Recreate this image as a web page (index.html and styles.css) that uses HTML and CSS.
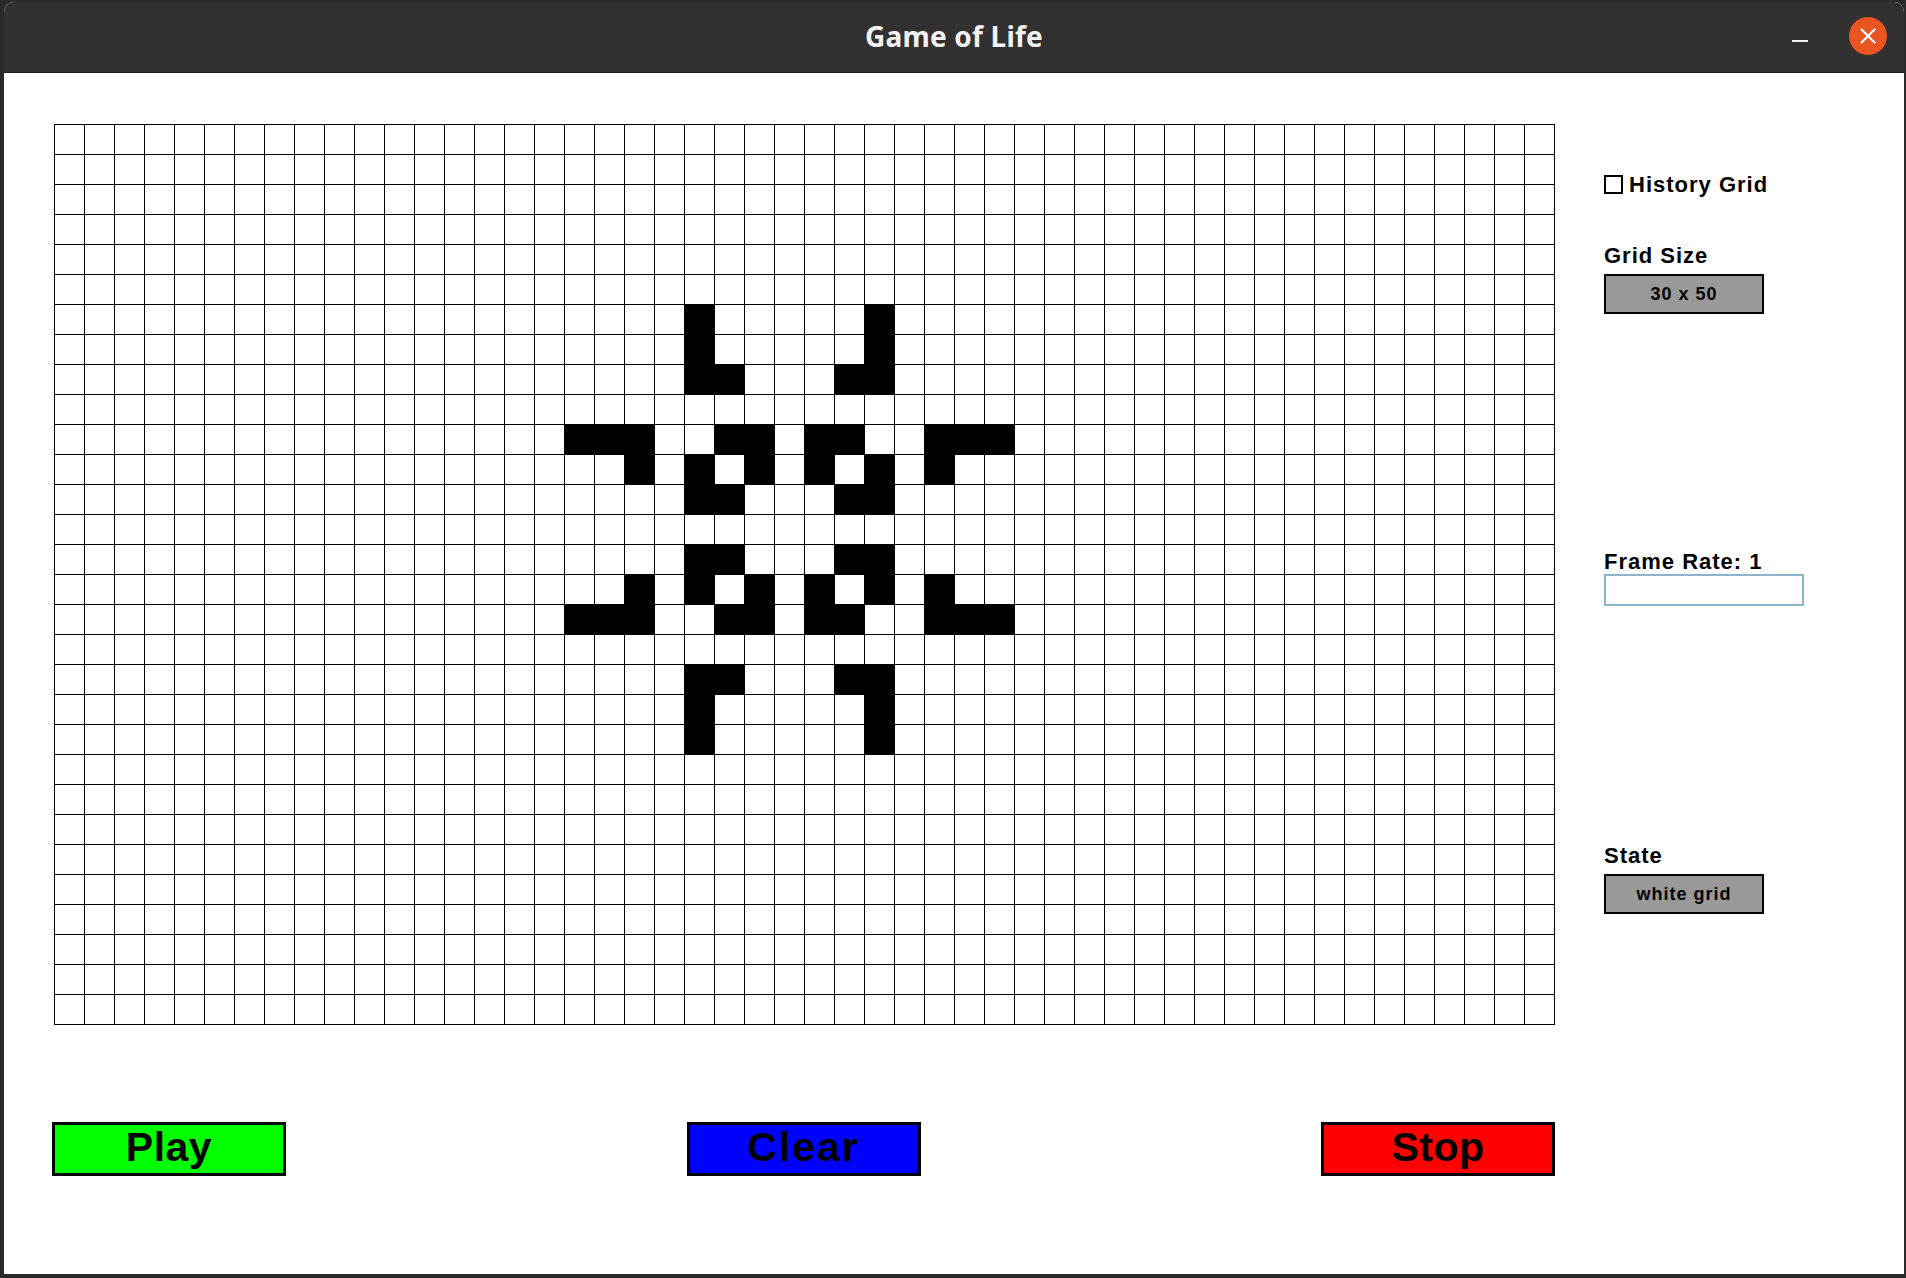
FILE: index.html
```html
<!DOCTYPE html>
<html lang="en">
<head>
<meta charset="utf-8">
<title>Game of Life</title>
<link rel="stylesheet" href="styles.css">
</head>
<body>
<div class="window">
  <header class="titlebar">
    <div class="tb-left"></div>
    <div class="tb-title">Game of Life</div>
    <div class="tb-right">
      <span class="tb-min"></span>
      <span class="tb-close">
        <svg width="16" height="16" viewBox="0 0 16 16"><path d="M1.5 1.5 L14.5 14.5 M14.5 1.5 L1.5 14.5" stroke="#fff" stroke-width="2.2" stroke-linecap="round"/></svg>
      </span>
    </div>
  </header>
  <main class="content">
    <div class="main">
      <div class="board">
        <div class="cell" style="grid-row:7;grid-column:22"></div>
        <div class="cell" style="grid-row:7;grid-column:28"></div>
        <div class="cell" style="grid-row:8;grid-column:22"></div>
        <div class="cell" style="grid-row:8;grid-column:28"></div>
        <div class="cell" style="grid-row:9;grid-column:22"></div>
        <div class="cell" style="grid-row:9;grid-column:23"></div>
        <div class="cell" style="grid-row:9;grid-column:27"></div>
        <div class="cell" style="grid-row:9;grid-column:28"></div>

        <div class="cell" style="grid-row:11;grid-column:18"></div>
        <div class="cell" style="grid-row:11;grid-column:19"></div>
        <div class="cell" style="grid-row:11;grid-column:20"></div>
        <div class="cell" style="grid-row:11;grid-column:23"></div>
        <div class="cell" style="grid-row:11;grid-column:24"></div>
        <div class="cell" style="grid-row:11;grid-column:26"></div>
        <div class="cell" style="grid-row:11;grid-column:27"></div>
        <div class="cell" style="grid-row:11;grid-column:30"></div>
        <div class="cell" style="grid-row:11;grid-column:31"></div>
        <div class="cell" style="grid-row:11;grid-column:32"></div>

        <div class="cell" style="grid-row:12;grid-column:20"></div>
        <div class="cell" style="grid-row:12;grid-column:22"></div>
        <div class="cell" style="grid-row:12;grid-column:24"></div>
        <div class="cell" style="grid-row:12;grid-column:26"></div>
        <div class="cell" style="grid-row:12;grid-column:28"></div>
        <div class="cell" style="grid-row:12;grid-column:30"></div>

        <div class="cell" style="grid-row:13;grid-column:22"></div>
        <div class="cell" style="grid-row:13;grid-column:23"></div>
        <div class="cell" style="grid-row:13;grid-column:27"></div>
        <div class="cell" style="grid-row:13;grid-column:28"></div>

        <div class="cell" style="grid-row:15;grid-column:22"></div>
        <div class="cell" style="grid-row:15;grid-column:23"></div>
        <div class="cell" style="grid-row:15;grid-column:27"></div>
        <div class="cell" style="grid-row:15;grid-column:28"></div>

        <div class="cell" style="grid-row:16;grid-column:20"></div>
        <div class="cell" style="grid-row:16;grid-column:22"></div>
        <div class="cell" style="grid-row:16;grid-column:24"></div>
        <div class="cell" style="grid-row:16;grid-column:26"></div>
        <div class="cell" style="grid-row:16;grid-column:28"></div>
        <div class="cell" style="grid-row:16;grid-column:30"></div>

        <div class="cell" style="grid-row:17;grid-column:18"></div>
        <div class="cell" style="grid-row:17;grid-column:19"></div>
        <div class="cell" style="grid-row:17;grid-column:20"></div>
        <div class="cell" style="grid-row:17;grid-column:23"></div>
        <div class="cell" style="grid-row:17;grid-column:24"></div>
        <div class="cell" style="grid-row:17;grid-column:26"></div>
        <div class="cell" style="grid-row:17;grid-column:27"></div>
        <div class="cell" style="grid-row:17;grid-column:30"></div>
        <div class="cell" style="grid-row:17;grid-column:31"></div>
        <div class="cell" style="grid-row:17;grid-column:32"></div>

        <div class="cell" style="grid-row:19;grid-column:22"></div>
        <div class="cell" style="grid-row:19;grid-column:23"></div>
        <div class="cell" style="grid-row:19;grid-column:27"></div>
        <div class="cell" style="grid-row:19;grid-column:28"></div>
        <div class="cell" style="grid-row:20;grid-column:22"></div>
        <div class="cell" style="grid-row:20;grid-column:28"></div>
        <div class="cell" style="grid-row:21;grid-column:22"></div>
        <div class="cell" style="grid-row:21;grid-column:28"></div>
      </div>
      <aside class="panel">
        <label class="history"><span class="checkbox"></span><span class="label">History Grid</span></label>
        <div class="label grid-size-label">Grid Size</div>
        <div class="valuebox">30 x 50</div>
        <div class="label frame-label">Frame Rate: 1</div>
        <input class="frame-input" type="text" value="">
        <div class="label state-label">State</div>
        <div class="valuebox">white grid</div>
      </aside>
    </div>
    <div class="controls">
      <button class="btn btn-play">Play</button>
      <button class="btn btn-clear">Clear</button>
      <button class="btn btn-stop">Stop</button>
    </div>
  </main>
</div>
</body>
</html>
```
FILE: styles.css
```css
html, body {
  margin: 0;
  padding: 0;
}
body {
  width: 1906px;
  height: 1278px;
  background: #2a2a2a;
  overflow: hidden;
  font-family: "Liberation Sans", Arial, sans-serif;
}
.window {
  margin: 2px 0 0 4px;
  width: 1900px;
  height: 1272px;
  display: flex;
  flex-direction: column;
  border-radius: 10px 10px 0 0;
  overflow: hidden;
  background: #fff;
}
.titlebar {
  height: 70px;
  flex: none;
  background: #323031;
  border-bottom: 1px solid #1f1e1e;
  display: grid;
  grid-template-columns: 1fr auto 1fr;
  align-items: center;
}
.tb-title {
  font-family: "Noto Sans", "Open Sans", sans-serif;
  font-weight: 700;
  font-size: 28px;
  color: #f2f2f2;
  letter-spacing: 0.2px;
  margin-top: -2px;
}
.tb-right {
  display: flex;
  justify-content: flex-end;
  align-items: center;
  padding-right: 17px;
  gap: 41px;
}
.tb-min {
  width: 16px;
  height: 2px;
  background: #f0f0f0;
  margin-top: 8px;
}
.tb-close {
  width: 38px;
  height: 38px;
  border-radius: 50%;
  background: #e95420;
  display: flex;
  align-items: center;
  justify-content: center;
  margin-top: -2px;
}
.content {
  flex: 1;
  background: #fff;
  padding-top: 51px;
}
.main {
  display: flex;
  align-items: flex-start;
  padding-left: 50px;
  gap: 49px;
}
.board {
  display: grid;
  grid-template-columns: repeat(50, 30px);
  grid-template-rows: repeat(30, 30px);
  width: 1500px;
  height: 900px;
  border-right: 1px solid #000;
  border-bottom: 1px solid #000;
  background-color: #fff;
  background-image:
    linear-gradient(to right, #000 1px, transparent 1px),
    linear-gradient(to bottom, #000 1px, transparent 1px);
  background-size: 30px 30px;
}
.cell {
  background: #000;
}
.panel {
  display: flex;
  flex-direction: column;
  align-items: flex-start;
}
.label {
  font-family: "Liberation Sans", Arial, sans-serif;
  font-weight: 700;
  font-size: 22px;
  line-height: 24px;
  letter-spacing: 1px;
  color: #000;
}
.history {
  display: flex;
  align-items: center;
  height: 24px;
  margin-top: 49px;
}
.checkbox {
  width: 19px;
  height: 19px;
  box-sizing: border-box;
  border: 2px solid #000;
  background: #fff;
  margin-right: 6px;
  margin-top: -2px;
}
.grid-size-label {
  margin-top: 47px;
}
.valuebox {
  margin-top: 6px;
  width: 160px;
  height: 40px;
  box-sizing: border-box;
  border: 2px solid #000;
  background: #999999;
  display: flex;
  align-items: center;
  justify-content: center;
  font-weight: 700;
  font-size: 18px;
  letter-spacing: 1px;
  color: #000;
}
.frame-label {
  margin-top: 236px;
}
.frame-input {
  display: block;
  width: 200px;
  height: 32px;
  box-sizing: border-box;
  border: 2px solid #8db4cd;
  outline: none;
  margin: 0;
  padding: 0 4px;
  background: #fff;
}
.state-label {
  margin-top: 238px;
}
.controls {
  display: flex;
  justify-content: space-between;
  width: 1503px;
  margin: 97px 0 0 48px;
}
.btn {
  width: 234px;
  height: 54px;
  box-sizing: border-box;
  border: 3px solid #000;
  border-radius: 0;
  padding: 0 0 3px 0;
  margin: 0;
  font-family: "Liberation Sans", Arial, sans-serif;
  font-weight: 700;
  font-size: 41px;
  line-height: 1;
  color: #000;
  letter-spacing: 0.5px;
}
.btn-play { background: #00ff00; }
.btn-clear { background: #0000ff; letter-spacing: 2px; }
.btn-stop { background: #ff0000; }
```
